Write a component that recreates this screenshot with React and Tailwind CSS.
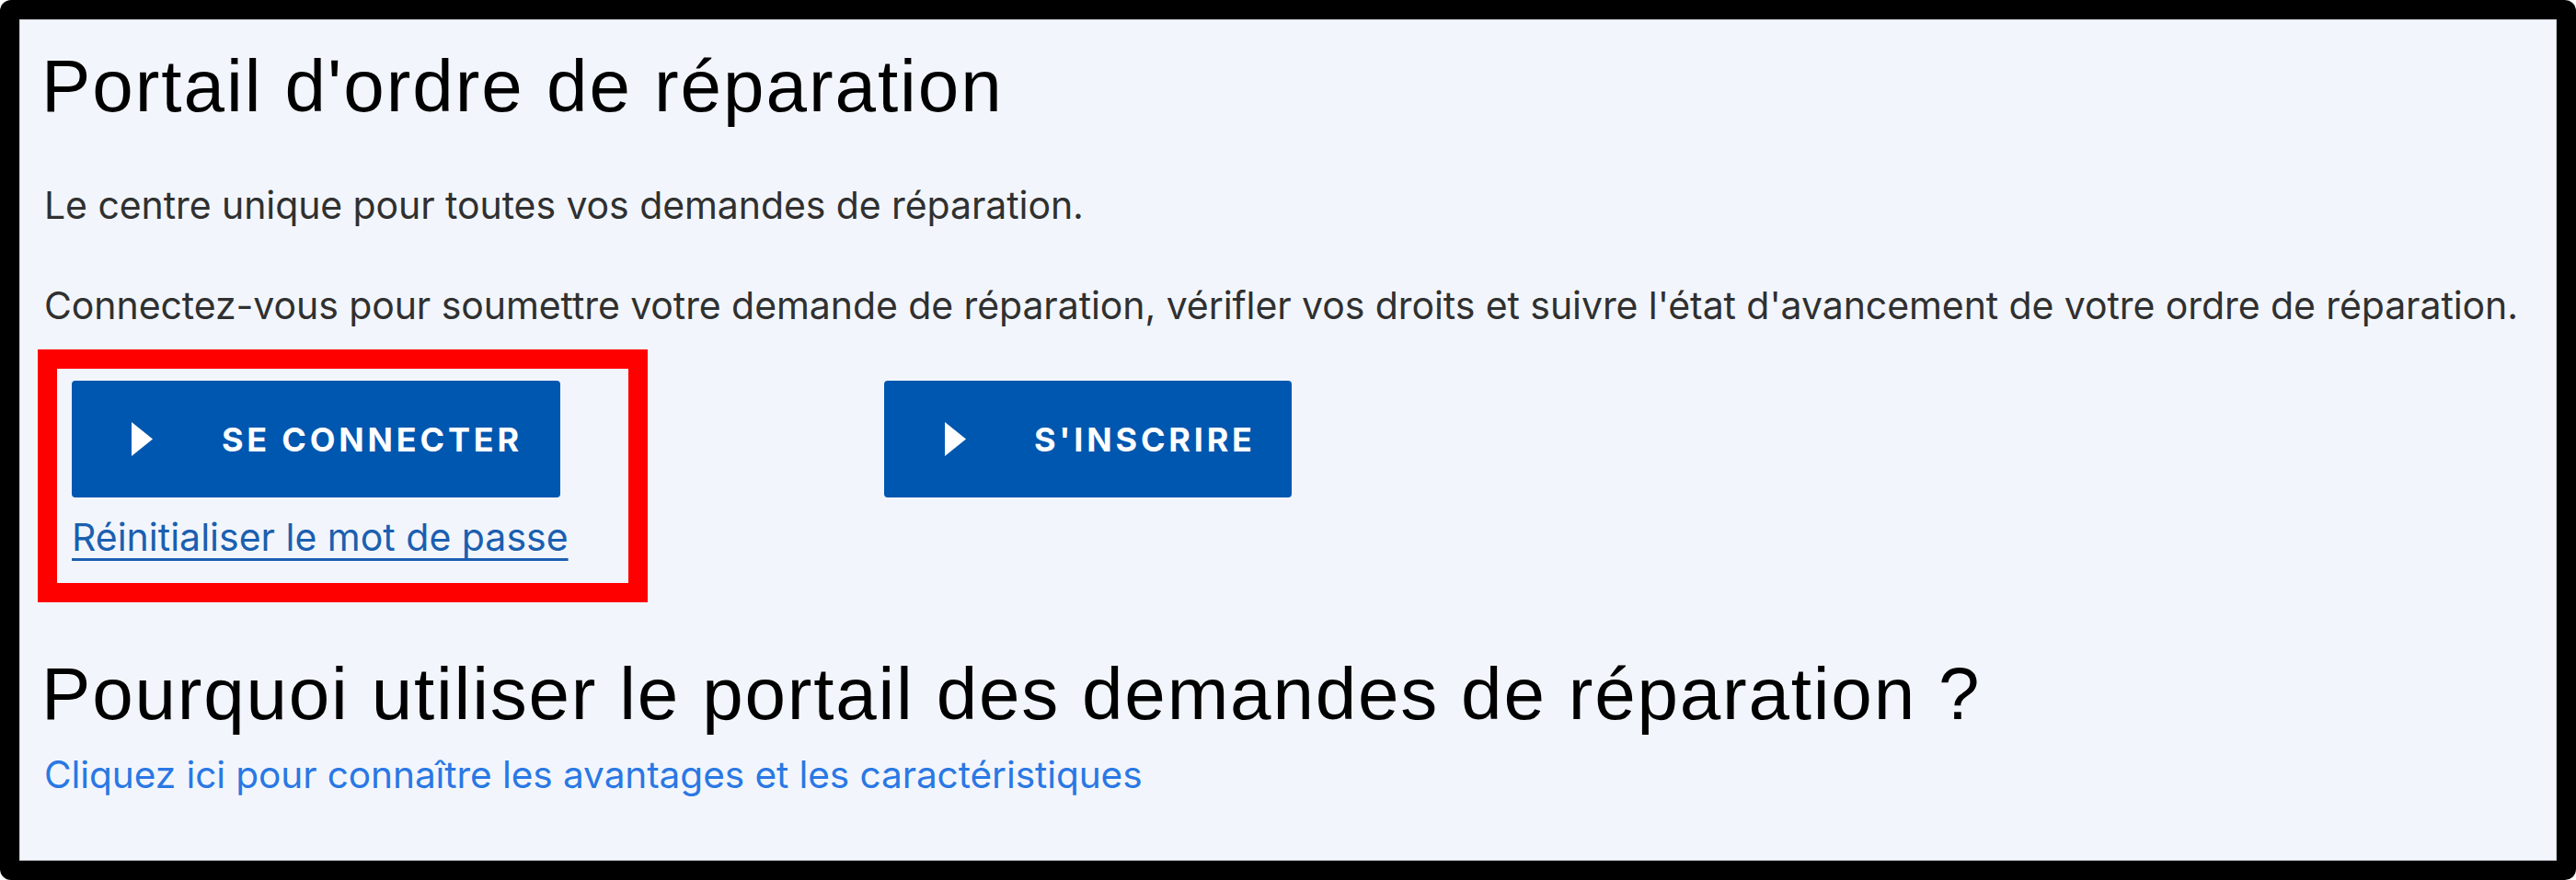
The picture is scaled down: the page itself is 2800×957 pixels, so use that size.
import React from "react";

function Tri() {
  return (
    <svg width="23" height="37" viewBox="0 0 23 37" className="shrink-0">
      <polygon points="0,0 23,18.5 0,37" fill="#ffffff" />
    </svg>
  );
}

export default function App() {
  return (
    <div className="w-[2800px] h-[957px] bg-white">
      <div className="w-[2800px] h-[957px] bg-black rounded-[12px] p-[21px]">
        <div className="w-full h-full bg-[#f2f6fc] border border-[#cfd3d8] pl-[23px] pt-[32px] flex flex-col">
          <h1 className="font-['Liberation_Sans',Arial,sans-serif] text-[80px] leading-[80px] tracking-[1.95px] text-black font-normal">
            Portail d'ordre de réparation
          </h1>
          <p className="mt-[69px] ml-[3px] font-['Inter','Noto_Sans',sans-serif] text-[41px] leading-[40px] tracking-[-0.08px] text-[#303030]">
            Le centre unique pour toutes vos demandes de réparation.
          </p>
          <p className="mt-[69px] ml-[3px] font-['Inter','Noto_Sans',sans-serif] text-[41px] leading-[40px] tracking-[-0.08px] text-[#303030] whitespace-nowrap">
            Connectez-vous pour soumettre votre demande de réparation, vérifler vos droits et suivre l'état d'avancement de votre ordre de réparation.
          </p>
          <div className="mt-[62px] ml-[33px] flex items-start gap-[352px]">
            <div className="relative w-[531px] flex flex-col">
              <div className="absolute left-[-37px] top-[-34px] w-[663px] h-[275px] border-[21px] border-[#ff0000] pointer-events-none" />
              <button className="w-[531px] h-[127px] bg-[#0057b0] rounded-[4px] flex items-center pl-[65px] gap-[75px] text-white font-['Inter','Noto_Sans',sans-serif] font-bold text-[36px] tracking-[3.8px]">
                <Tri />
                <span>SE CONNECTER</span>
              </button>
              <a
                href="#"
                className="mt-[23px] whitespace-nowrap font-['Inter','Noto_Sans',sans-serif] text-[41px] leading-[40px] text-[#1b5fb0] underline decoration-[3px] underline-offset-[8px]"
              >
                Réinitialiser le mot de passe
              </a>
            </div>
            <button className="w-[443px] h-[127px] bg-[#0057b0] rounded-[4px] flex items-center pl-[66px] gap-[74px] text-white font-['Inter','Noto_Sans',sans-serif] font-bold text-[36px] tracking-[3.8px]">
              <Tri />
              <span>S'INSCRIRE</span>
            </button>
          </div>
          <h2 className="mt-[111px] font-['Liberation_Sans',Arial,sans-serif] text-[80px] leading-[80px] tracking-[1.8px] text-black font-normal">
            Pourquoi utiliser le portail des demandes de réparation ?
          </h2>
          <a
            href="#"
            className="mt-[28px] ml-[3px] font-['Inter','Noto_Sans',sans-serif] text-[40.6px] leading-[40px] tracking-[-0.08px] text-[#2a78e4]"
          >
            Cliquez ici pour connaître les avantages et les caractéristiques
          </a>
        </div>
      </div>
    </div>
  );
}
